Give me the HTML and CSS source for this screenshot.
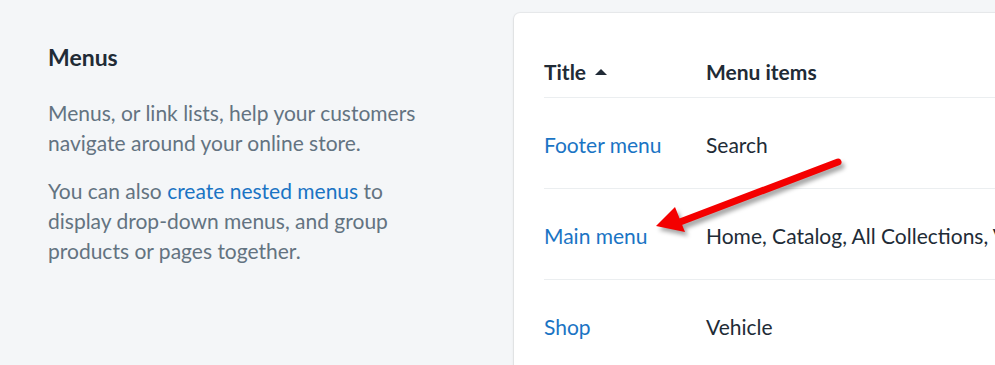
FILE: index.html
```html
<!DOCTYPE html>
<html lang="en">
<head>
  <meta charset="UTF-8" />
  <meta name="viewport" content="width=device-width, initial-scale=1.0" />
  <title>Menus</title>
  <link rel="stylesheet" href="styles.css">
</head>
<body>
  <div class="layout">
    <section class="annotation">
      <h2 class="annotation-title">Menus</h2>
      <p>Menus, or link lists, help your customers navigate around your online store.</p>
      <p>You can also <a href="#">create nested menus</a> to display drop-down menus, and group products or pages together.</p>
    </section>

    <section class="card">
      <table class="menu-table">
        <thead>
          <tr>
            <th class="col-title">Title <span class="sort-caret"></span></th>
            <th>Menu items</th>
          </tr>
        </thead>
        <tbody>
          <tr>
            <td class="col-title"><a href="#">Footer menu</a></td>
            <td>Search</td>
          </tr>
          <tr>
            <td class="col-title"><a href="#">Main menu</a></td>
            <td>Home, Catalog, All Collections, Vehicle</td>
          </tr>
          <tr>
            <td class="col-title"><a href="#">Shop</a></td>
            <td>Vehicle</td>
          </tr>
        </tbody>
      </table>
    </section>
  </div>

  <!-- annotation arrow drawn over the screenshot -->
  <svg class="arrow" width="995" height="365" viewBox="0 0 995 365">
    <line x1="838" y1="162" x2="680" y2="222" stroke="#f40000" stroke-width="7" stroke-linecap="round" />
    <polygon points="656,226 675,207 685,232" fill="#f40000" />
  </svg>
</body>
</html>
```

FILE: styles.css
```css
html, body {
  margin: 0;
  padding: 0;
  height: 100%;
  background: #f4f6f8;
  font-family: 'Lato', 'Noto Sans', sans-serif;
  overflow: hidden;
}

a {
  color: #1a74c4;
  text-decoration: none;
}

.layout {
  display: flex;
  align-items: flex-start;
  height: 100%;
  padding-top: 13px;
  box-sizing: border-box;
  overflow: hidden;
}

.annotation {
  width: 374px;
  flex-shrink: 0;
  padding: 30px 92px 0 48px;
  color: #637381;
  font-size: 21px;
  line-height: 30px;
}

.annotation-title {
  margin: 0 0 27px;
  color: #212b36;
  font-size: 23px;
  font-weight: 700;
  line-height: 28px;
}

.annotation p {
  margin: 0 0 18px;
}

.card {
  flex-shrink: 0;
  width: 600px;
  min-height: 400px;
  padding: 0 30px;
  background: #fff;
  border-radius: 6px;
  box-shadow: 0 0 0 1px rgba(63, 63, 68, 0.05), 0 1px 3px 0 rgba(63, 63, 68, 0.15);
}

.menu-table {
  width: 100%;
  border-collapse: collapse;
  font-size: 21px;
  line-height: 30px;
  color: #212b36;
  white-space: nowrap;
}

.menu-table th {
  padding: 44px 0 10px;
  text-align: left;
  font-weight: 700;
  border-bottom: 1px solid #ebeef0;
}

.menu-table td {
  padding: 32px 0 28px;
  border-bottom: 1px solid #ebeef0;
}

.menu-table tbody tr:last-child td {
  border-bottom: none;
}

.col-title {
  width: 162px;
}

.sort-caret {
  display: inline-block;
  margin-left: 4px;
  vertical-align: 5px;
  border-left: 6px solid transparent;
  border-right: 6px solid transparent;
  border-bottom: 6px solid #212b36;
}

.arrow {
  position: absolute;
  top: 0;
  left: 0;
  pointer-events: none;
  filter: drop-shadow(3px 4px 2px rgba(0, 0, 0, 0.35));
}
```
